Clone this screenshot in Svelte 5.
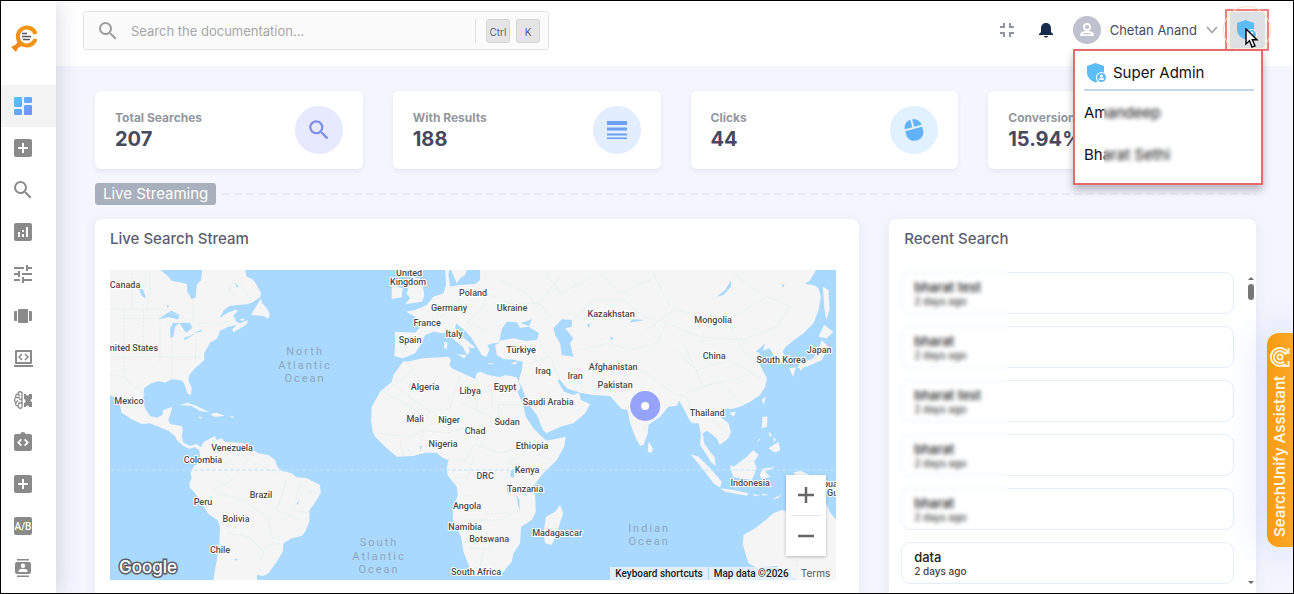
<script>
  const nav = ['dashboard', 'add', 'search', 'analytics', 'tune', 'carousel', 'laptop', 'brain', 'integration', 'add', 'ab', 'contacts'];
  const navNames = ['Dashboard', 'Content Sources', 'Search Clients', 'Analytics', 'Tuning', 'Recommendations', 'Developer', 'Machine Learning', 'API', 'Addons', 'A/B Testing', 'Users'];

  const stats = [
    { label: 'Total Searches', value: '207', icon: 'search', tint: 'violet' },
    { label: 'With Results', value: '188', icon: 'lines', tint: 'blue' },
    { label: 'Clicks', value: '44', icon: 'mouse', tint: 'sky' },
    { label: 'Conversions', value: '15.94%', icon: '', tint: 'sky' }
  ];

  const recent = ['bharat test', 'bharat', 'bharat test', 'bharat', 'bharat', 'data'];

  const places = [
    ['Canada', 125, 288], ['United States', 131, 351], ['Mexico', 129, 404], ['Venezuela', 232, 451],
    ['Colombia', 203, 463], ['Brazil', 261, 498], ['Peru', 203, 505], ['Bolivia', 236, 522], ['Chile', 220, 553],
    ['United', 409, 276], ['Kingdom', 408, 285], ['Poland', 473, 296], ['Germany', 449, 311], ['Ukraine', 512, 311],
    ['France', 427, 326], ['Italy', 454, 337], ['Spain', 410, 343], ['Türkiye', 521, 353], ['Kazakhstan', 611, 317],
    ['Mongolia', 713, 323], ['China', 714, 359], ['Japan', 819, 353], ['South Korea', 781, 363], ['Iraq', 543, 374],
    ['Iran', 575, 379], ['Afghanistan', 613, 370], ['Pakistan', 615, 388], ['Algeria', 425, 390], ['Libya', 470, 394],
    ['Egypt', 505, 390], ['Saudi Arabia', 548, 405], ['Mali', 415, 422], ['Niger', 449, 423], ['Chad', 475, 434],
    ['Sudan', 507, 425], ['Nigeria', 443, 447], ['Ethiopia', 532, 449], ['DRC', 485, 479], ['Kenya', 527, 473],
    ['Tanzania', 525, 492], ['Angola', 467, 509], ['Namibia', 465, 530], ['Botswana', 489, 542], ['Madagascar', 557, 536],
    ['South Africa', 476, 575], ['Thailand', 707, 416], ['Indonesia', 750, 486], ['Papua New', 835, 487], ['Guinea', 841, 496], ['Australia', 806, 547]
  ];

  const oceans = [
    ['North', 305, 355], ['Atlantic', 305, 369], ['Ocean', 305, 382],
    ['South', 379, 546], ['Atlantic', 379, 560], ['Ocean', 379, 573],
    ['Indian', 649, 532], ['Ocean', 649, 545]
  ];
</script>

{#snippet icon(name)}
  <svg class="icon" viewBox="0 0 24 24" width="24" height="24" aria-hidden="true">
    {#if name === 'dashboard'}
      <defs><linearGradient id="dash" x1="3" y1="3" x2="21" y2="21" gradientUnits="userSpaceOnUse"><stop offset="0" stop-color="#53c5fe" /><stop offset="1" stop-color="#768cfb" /></linearGradient></defs>
      <g fill="url(#dash)"><rect x="3" y="3" width="8" height="10" rx="1" /><rect x="3" y="15" width="8" height="6" rx="1" /><rect x="13" y="3" width="8" height="6" rx="1" /><rect x="13" y="11" width="8" height="10" rx="1" /></g>
    {:else if name === 'add'}
      <path d="M19 3H5a2 2 0 0 0-2 2v14a2 2 0 0 0 2 2h14a2 2 0 0 0 2-2V5a2 2 0 0 0-2-2zm-2 10h-4v4h-2v-4H7v-2h4V7h2v4h4v2z" />
    {:else if name === 'search'}
      <path d="M15.5 14h-.79l-.28-.27A6.471 6.471 0 0 0 16 9.5 6.5 6.5 0 1 0 9.5 16c1.61 0 3.09-.59 4.23-1.57l.27.28v.79l5 4.99L20.49 19l-4.99-5zm-6 0C7.01 14 5 11.99 5 9.5S7.01 5 9.5 5 14 7.01 14 9.5 11.99 14 9.5 14z" />
    {:else if name === 'analytics'}
      <path d="M19 3H5a2 2 0 0 0-2 2v14a2 2 0 0 0 2 2h14a2 2 0 0 0 2-2V5a2 2 0 0 0-2-2zM9 17H7v-5h2v5zm4 0h-2v-3h2v3zm0-5h-2v-2h2v2zm4 5h-2V7h2v10z" />
    {:else if name === 'tune'}
      <path d="M3 17v2h6v-2H3zM3 5v2h10V5H3zm10 16v-2h8v-2h-8v-2h-2v6h2zM7 9v2H3v2h4v2h2V9H7zm14 4v-2H11v2h10zm-6-4h2V7h4V5h-4V3h-2v6z" />
    {:else if name === 'carousel'}
      <path d="M8 5h8a1 1 0 0 1 1 1v12a1 1 0 0 1-1 1H8a1 1 0 0 1-1-1V6a1 1 0 0 1 1-1zM4 7h2v10H4a1 1 0 0 1-1-1V8a1 1 0 0 1 1-1zm14 0h2a1 1 0 0 1 1 1v8a1 1 0 0 1-1 1h-2z" />
    {:else if name === 'laptop'}
      <path fill-rule="evenodd" d="M5 4h15a1 1 0 0 1 1 1v12a1 1 0 0 1-1 1H5a1 1 0 0 1-1-1V5a1 1 0 0 1 1-1zm1 2v10h13V6zM3 19h19v2H3z" /><path d="M11 8 8 11l3 3M14 8l3 3-3 3" fill="none" stroke="currentColor" stroke-width="1.500" />
    {:else if name === 'brain'}
      <path d="M11 4.500C9 3 7 4 7 6 5 6 4 8 5 9.500 3 10.500 3 13.500 5 14.500 4 16.500 5 18 7 18c0 2 3 3 4 1.500zM7 6l2 2M5 9.500h3l1 2M5 14.500l2-2M7 18l1-3h3M11 11l-2 1" fill="none" stroke="currentColor" stroke-width="1.300" />
      <path d="M13 6h2c0 2 3 2 3 0h3v5c-2 0-2 3 0 3v5h-3c0-2-3-2-3 0h-2v-4c2 0 2-4 0-4z" />
    {:else if name === 'integration'}
      <path fill-rule="evenodd" d="M19 4h-4.200a3 3 0 0 0-5.600 0H5a2 2 0 0 0-2 2v13a2 2 0 0 0 2 2h14a2 2 0 0 0 2-2V6a2 2 0 0 0-2-2zm-8 11-1.200 1.200L6 12.500l3.800-3.700L11 10l-2.500 2.500zm3.200 1.200L13 15l2.500-2.500L13 10l1.200-1.200 3.800 3.700z" />
    {:else if name === 'ab'}
      <path d="M19 3H5a2 2 0 0 0-2 2v14a2 2 0 0 0 2 2h14a2 2 0 0 0 2-2V5a2 2 0 0 0-2-2z" />
      <text x="12" y="16" fill="#fff" font-family="Roboto, sans-serif" font-size="10" font-weight="500" text-anchor="middle">A/B</text>
    {:else if name === 'contacts'}
      <path d="M6 3h12v1.500H6zM6 19.500h12V21H6z" /><path fill-rule="evenodd" d="M6 6h12a2 2 0 0 1 2 2v8a2 2 0 0 1-2 2H6a2 2 0 0 1-2-2V8a2 2 0 0 1 2-2zm6 1.500a2.200 2.200 0 1 0 0 4.400 2.200 2.200 0 0 0 0-4.400zM7.500 16h9v-1c0-3-9-3-9 0z" />
    {:else if name === 'lines'}
      <path d="M2 3h20v4H2zM2 9.500h20v3H2zM2 15.500h20v2H2zM2 19.500h20v1.500H2z" />
    {:else if name === 'mouse'}
      <g transform="rotate(-15 12 12)"><path d="M11 1.200C6.700 1.700 3.600 4.500 3.300 9H11zM13 1.200c4.300.5 7.400 3.300 7.700 7.800H13zM3.300 11h17.400v3.500c0 11-17.400 11-17.400 0z" /></g>
    {/if}
  </svg>
{/snippet}

{#snippet shield()}
  <svg class="shield" viewBox="0 0 22 22" width="22" height="22" aria-hidden="true">
    <path d="M9.500 1 18 4v6c0 6-4 9-8.500 10.500C5 19 1 16 1 10V4z" fill="#5cbcf6" />
    <circle cx="15.500" cy="15.500" r="5.500" fill="#fff" /><circle cx="15.500" cy="15.500" r="4.500" fill="#5cbcf6" />
    <circle cx="15.500" cy="14" r="1.600" fill="#fff" /><path d="M12.800 18c0-3 5.400-3 5.400 0z" fill="#fff" />
  </svg>
{/snippet}

<div class="shell">
  <nav class="sidebar" aria-label="Main">
    <a class="logo" href="#home" aria-label="Home">
      <svg viewBox="0 0 30 30" width="30" height="30" aria-hidden="true">
        <path d="M25.500 11A9 9 0 1 0 25.500 16" fill="none" stroke="#f39313" stroke-width="4" />
        <path d="m9 18 4 4-5 3-2 4-5-5 4-2z" fill="#ef8a16" />
        <path d="M12 10.500h5M12 13.500h9M13 16.500h7" stroke="#555" stroke-width="1.300" />
      </svg>
    </a>
    {#each nav as name, i}
      <a class="nav-item" class:active={i === 0} href="#section-{i}" aria-label={navNames[i]}>{@render icon(name)}</a>
    {/each}
  </nav>

  <div class="page">
    <header>
      <div class="search">
        <label for="doc-search" aria-label="Search">{@render icon('search')}</label>
        <input id="doc-search" type="text" placeholder="Search the documentation..." />
        <span class="keys"><kbd>Ctrl</kbd><kbd>K</kbd></span>
      </div>
      <div class="tools">
        <button class="plain" aria-label="Exit full screen">
          <svg viewBox="0 0 14 14" width="14" height="14" aria-hidden="true"><path d="M0 4h4V0M10 0v4h4M14 10h-4v4M4 14v-4H0" fill="none" stroke="#8f94a3" stroke-width="2" /></svg>
        </button>
        <button class="plain bell" aria-label="Notifications">
          <svg viewBox="0 0 16 16" width="16" height="16" aria-hidden="true"><path d="M8 1c3.500 0 5 2.500 5 5.500V10l2 2v1H1v-1l2-2V6.500C3 3.500 4.500 1 8 1zM6 14h4c-.5 2-3.500 2-4 0z" fill="#172b4d" /></svg>
        </button>
        <button class="user">
          <svg viewBox="0 0 28 28" width="28" height="28" aria-hidden="true"><circle cx="14" cy="14" r="14" fill="#bfc1cf" /><circle cx="14" cy="11" r="3" fill="none" stroke="#fff" stroke-width="1.800" /><path d="M8 19.200c0-4.300 12-4.300 12 0z" fill="none" stroke="#fff" stroke-width="1.800" stroke-linejoin="round" /></svg>
          <span>Chetan Anand</span>
          <svg viewBox="0 0 12 8" width="12" height="8" aria-hidden="true"><path d="m1 1 5 5.500L11 1" fill="none" stroke="#a5a5a5" stroke-width="1.800" /></svg>
        </button>
        <div class="role">
          <button class="role-button" aria-label="Switch role"><span>{@render shield()}</span></button>
          <svg class="cursor" viewBox="0 0 14 20" width="14" height="20" aria-hidden="true"><path d="M1 1v15l3.500-3.300L7 19l3-1.200-2.700-6H12z" fill="#fff" stroke="#000" stroke-width="1.400" /></svg>
          <div class="menu">
            <div class="menu-title">{@render shield()}<span>Super Admin</span></div>
            <button>Amandeep</button>
            <button>Bharat Sethi</button>
            <i class="veil"></i>
          </div>
        </div>
      </div>
    </header>

    <main>
      <section class="stats">
        {#each stats as s}
          <article class="stat">
            <div><h2>{s.label}</h2><strong>{s.value}</strong></div>
            <span class="badge {s.tint}">{@render icon(s.icon)}</span>
          </article>
        {/each}
      </section>

      <div class="divider"><span>Live Streaming</span><i></i></div>

      <section class="panels">
        <article class="panel stream">
          <h2>Live Search Stream</h2>
          <div class="map">
            <svg viewBox="0 0 726 310" preserveAspectRatio="xMidYMid slice" role="img" aria-label="World map">
              <g transform="scale(.33333) translate(-30 -30)">
                <path class="land" d="M30 30H180L200 45 215 62 245 68 260 72 262 95 275 118 287 112 290 75 303 60 307 30H435L440 50 458 58 470 75 483 100 480 112 455 128 440 133 390 137 372 150 358 175 380 160 410 148 412 155 400 165 408 185 420 190 445 180 438 195 400 217 397 208 410 195 385 200 360 212 352 235 330 248 318 270 312 280 313 300 285 325 268 345 265 360 275 385 273 405 262 400 252 368 240 360 215 358 195 368 175 363 150 372 132 385 130 420 135 445 150 468 170 473 187 465 190 450 217 440 213 455 205 480 210 492 245 498 248 510 245 530 250 548 270 558 290 552 302 562 312 545 345 528 350 540 365 535 375 545 430 550 450 565 475 580 505 585 525 600 532 620 545 632 575 640 590 652 620 655 660 675 662 700 640 735 628 750 628 785 615 815 605 828 575 835 550 850 548 875 530 905 505 940 490 948 470 945 472 960H340L345 930 352 890 358 850 360 800 352 780 325 762 305 730 285 700 270 683 268 670 275 655 272 640 280 620 300 605 300 585 297 570 285 562 268 566 250 558 230 540 225 528 205 512 175 500 150 490 125 492 95 478 65 458 60 435 42 410 30 405z" />
                <path class="land" d="m240 435 22-7 28 10 38 19-28-4-25-15zM330 462l20-4 25 9-30 4zM293 470l14 2-5 4zM387 469h15l-4 4zM453 165l12-20 18-30 3 15 14 14 9 17-4 15-14-8zM417 178l12 6 5-8z" />
                <path class="water" d="m175 178 25-18 15-8 23 13-3 13-30-6zM212 235l-2-30 10-17 18 2-13 10-5 30zM238 188l32 0 7 16-19 14-13-18zM250 235l35-13-30 18zM280 218l30-10-10 8zM115 82l15 8 8 25-13-7zM200 135l8 3-6 5zM405 68l10 10-4 6zM403 897l12-1-8 6zM590 730l8-10-5 15z" />
                <path class="border" d="M30 148H185L290 188 358 195 410 175M150 40v45l-10 60M280 118v75M95 40v105M30 345l45 5 30 35 35 20M30 290h275M60 175h110M130 150v130M72 150v190M180 190v115M215 240v115M290 215l-5 90M410 110l-25-20 20-30 40 45M340 690l60-30-40-30 50-50 60 30 60 30M350 700l80 20 70 50 20 70M385 820l60 10 50 50M560 660l-30 90 70 30M600 670l-20 80 50 10M620 690l30 10M365 790l40 40M480 900l20-40 40-10" />
              </g>
              <g transform="scale(.33333) translate(750 -30)">
                <path class="land" d="M35 440 60 395 95 365 100 345 130 303 140 305 190 295 265 290 272 300 268 315 275 325 345 357 350 340 360 335 385 345 420 352 435 345 470 352 482 385 472 395 488 430 497 470 520 505 545 530 560 542 617 530 612 560 590 600 545 645 530 665 515 685 525 705 527 755 515 780 483 800 480 850 460 880 455 905 430 935 420 948H345L330 925 310 875 303 830 278 780 280 740 293 705 290 680 262 645 260 625 265 600 245 592 230 578 195 578 160 588 110 590 80 565 65 550 45 530 38 515 33 480z" />
                <path class="land" d="M105 215 165 218 178 205 165 170 138 155 165 150 200 135 220 110 250 100 258 75 255 30H268L265 45 270 80 300 75 345 72 360 60V30H1368L1350 60 1335 72 1360 75 1375 85 1382 110 1375 150 1360 190 1330 220 1295 245 1275 262 1268 275 1280 300 1250 312 1235 275 1228 265 1208 272 1215 250 1187 275 1200 280 1190 298 1210 335 1220 355 1215 380 1200 405 1170 425 1140 440 1115 447 1085 445 1080 470 1105 490 1112 515 1105 535 1078 555 1070 535 1040 512 1028 520 1032 550 1050 575 1063 590 1067 617 1055 610 1030 570 1020 555 1022 520 1015 490 995 490 985 475 970 445 957 422 950 437 925 440 900 470 865 495 863 520 850 555 840 557 825 530 810 490 802 450 785 447 765 425 750 408 700 405 660 398 620 385 598 358 592 362 612 395 640 405 657 398 662 420 690 432 675 460 640 490 600 500 560 520 550 512 530 465 500 425 485 380 475 365 485 330 488 305 465 300 430 297 410 285 405 255 420 248 400 250 382 255 388 270 378 292 365 285 350 260 335 235 318 215 300 200 288 190 285 205 300 225 325 245 345 262 335 265 325 260 330 275 320 285 308 260 280 238 262 215 245 220 222 215 195 225 185 250 165 280 140 290 125 295 103 288 105 250z" />
                <path class="land" d="M273 30h47l-5 15-15 10-10 15zM155 50l30 8 8 50-8 17-50 8 15-18-10-14zM95 75l33 10-3 27-30 5zM293 283l27 2-8 10zM252 245l10 3-2 20-8-3zM383 308l22 3-18 2zM452 310l22-6-10 10zM558 770l27-15 15-20 9 25-19 60-15 35-20-5-5-35z" />
                <path class="water" d="m418 242 7-35 15-22 30 2 10 16 25-3 32 20-7 20-32 3-38-8zM482 190l33-12-8 20zM580 205l25-27 30 2v20l-20 5 25 30-10 15 10 40-35-5-5-35-15-25zM452 632l12-4-3 25-10-3zM468 705l10 15v35zM438 670l5 32 6-3zM178 557l8 2-5 12zM680 195l10-5-3 15zM808 188l10-10 36 2-30 5zM1070 110l25-20 18-30-1 20-22 25zM1265 75l8-3-4 12zM750 230l12 5-10 6z" />
                <path class="border" d="M130 305l30 20-40 40-50 30 140 80M100 375l110 80 60-10 30-100M350 450l0-95M305 430l110 50 0-45h65M395 350v90M60 520l90 10 40-20 70 10 60-20M180 575l10-60M130 590l-10-50M265 600l50 0 30-50 70 30 70-20M340 590l-15 60-60 5M435 660l15-60 60-20M290 700l60 10 30 50 70 0M300 780l120 0 60-30M330 865l60 0 40-40M310 930l50-10 10-50M550 530l-30 50 60 20M110 220l20 60M170 215l60 0M215 110l25 40-25 60M290 80l10 60-60 30M350 70l30 60-60 60 60 20M380 100l70 30 90 0 40 50M510 310l60-20 30 70M570 280l-30-30M640 180l60-60 90 0 60 50 70 20-30 60-80 20-70-20-80 20M640 390l40-60 60-20 70-10M760 410l50-90 50 20 80 60 40 10 20 80M860 210l80-60 100 20 80 0 100-60 70 30-40 60-100 40-130-10-100-40M940 270l70 60 100-30 100 60M970 250l60 130 120-30M1100 180l60 110M1150 440l-70-80-100 40M420 60l80 40 30 40 70-90M560 40l40 60 100-50M720 40l60 60 90-40M880 40l50 100M1120 40l80 60M820 400l60 50-30 60M1030 440l50 60 20 20" />
              </g>
              <g transform="scale(.33333) translate(1470 -30)">
                <path class="land" d="m145 545 13 20-3 13-12-2zM272 583l23 7 35 35 35 40-5 18-20-13-30-40zM360 685l40 5 45 10-5 7-65-12zM390 615l10 5 40-30 20-20 15 15-13 20 8 20-15 35-55-8-8-22zM480 640l10-15 35-3-30 13 15 15-15 5-5 10-10-15zM487 470l15 0-2 30-15 5zM505 565l30-20 5 25-15 8zM505 515l10 10-6 7zM520 530l8 10-8 5zM482 535l-12 15 6-12zM485 420l12-12-6 27zM388 458l20-3-8 15zM655 230l17-35 28 20-20 20zM665 240l20 20-20 40-45 20-30 5 10-15 40-15 15-30zM568 325l20-3-10 28zM595 318l18 2-12 12zM668 80l17 10 3 60-10 30-6-40zM430 825l35-20 25-20 30-25 25-10 30 8 100 70 3-100 12 30 18 22v180H590l-60-42-60 5-25-13-8-25-9-32zM580 638l20-6 40 18 70 20v40l-90-20zM455 703l25 2-15 4zM485 700l20 4-17 3zM515 718l30-15-12 12z" />
                <path class="border" d="M402 620l60-20M590 960V800" />
              </g>
              <path class="equator" d="M0 200H726" />
              <g transform="translate(-110 -270)">
                {#each oceans as [name, x, y]}<text class="ocean" {x} {y}>{name}</text>{/each}
                {#each places as [name, x, y]}<text class="place" {x} {y}>{name}</text>{/each}
                <circle cx="645" cy="406" r="15" fill="#8f9ffa" opacity=".95" /><circle cx="645" cy="406" r="4" fill="#fff" />
                <text class="google" x="119" y="573">Google</text>
              </g>
            </svg>
            <div class="zoom">
              <button aria-label="Zoom in"><svg viewBox="0 0 18 18" width="18" height="18" aria-hidden="true"><path d="M9 1v16M1 9h16" stroke="#666" stroke-width="2.500" /></svg></button>
              <button aria-label="Zoom out"><svg viewBox="0 0 18 18" width="18" height="18" aria-hidden="true"><path d="M1 9h16" stroke="#666" stroke-width="2.500" /></svg></button>
            </div>
            <div class="credits"><button>Keyboard shortcuts</button><span>Map data ©2026</span><a href="#terms">Terms</a></div>
          </div>
        </article>

        <article class="panel recent">
          <h2>Recent Search</h2>
          <div class="feed">
            <ul>
              {#each recent as term}
                <li><span>{term}</span><small>2 days ago</small></li>
              {/each}
            </ul>
            <div class="track"><i class="up"></i><i class="thumb"></i><i class="down"></i></div>
            <i class="veil"></i>
          </div>
        </article>
      </section>
    </main>
  </div>

  <button class="assistant">
    <span>SearchUnify Assistant</span>
    <svg viewBox="0 0 20 20" width="20" height="20" aria-hidden="true"><g fill="none" stroke="#fff3d6" stroke-width="2"><path d="M15.500 17A9 9 0 1 1 18 6M14 14.500A6 6 0 1 1 15.500 8M18.500 1v5h-4M18.500 14v5h-6" /><circle cx="10" cy="10" r="2.500" /></g></svg>
  </button>
</div>

<style>
  :global(body) { margin: 0; }
  .shell, .shell :global(*) { box-sizing: border-box; }
  .shell {
    display: flex;
    position: relative;
    height: 100vh;
    overflow: hidden;
    border: 1px solid #000;
    background: #f4f5fd;
    color: #484b5e;
    font-family: Inter, "Noto Sans", sans-serif;
  }
  button, input { font: inherit; color: inherit; }
  button { border: 0; background: none; padding: 0; }
  a { color: inherit; text-decoration: none; }
  h2, ul { margin: 0; padding: 0; font-weight: 500; }
  .icon { display: block; fill: currentColor; }

  .sidebar {
    display: flex;
    flex-direction: column;
    flex: none;
    width: 55px;
    background: #fff;
    box-shadow: 0 0 24px rgba(60, 50, 90, .22);
    z-index: 2;
    color: #8a8a8a;
  }
  .logo { flex: none; height: 84px; padding: 22px 0 0 9px; }
  .nav-item { display: flex; flex: none; align-items: center; height: 42px; padding-left: 10px; }
  .active { background: #f3f3f3; }

  .page { display: flex; flex: 1; flex-direction: column; min-width: 0; }
  header {
    display: flex;
    flex: none;
    justify-content: space-between;
    height: 65px;
    padding: 10px 24px 0 27px;
    background: #fff;
  }
  .search {
    display: flex;
    align-items: center;
    width: 466px;
    height: 39px;
    padding: 0 8px 0 12px;
    border: 1px solid #e4e4e4;
    border-radius: 3px;
    background: #fbfbfb;
    color: #9c9c9c;
  }
  .search input { flex: 1; min-width: 0; height: 24px; margin-left: 11px; padding: 0; border: 0; outline: 0; background: none; font-size: 13px; }
  .search input::placeholder { color: #a6a6a6; opacity: 1; }
  .keys { display: flex; gap: 6px; padding-left: 10px; border-left: 1px solid #e0e0e0; }
  kbd { width: 24px; height: 24px; border: 1px solid #d3d3d3; border-radius: 3px; background: #e5e5e5; color: #5d6070; font: 10px/24px Inter, sans-serif; text-align: center; }

  .tools { display: flex; align-items: center; height: 38px; }
  .plain { display: flex; margin-right: 24px; }
  .bell { margin-right: 19px; }
  .user { display: flex; align-items: center; gap: 9px; font-size: 13px; }
  .role { position: relative; margin-left: 7px; }
  .role-button { display: grid; place-items: center; width: 44px; height: 42px; border: 2px solid #ed7f80; background: #fdf3e8; }
  .role-button span { display: grid; place-items: center; width: 35px; height: 36px; border-radius: 4px; background: #dde1e4; }
  .role-button::before { content: ""; position: absolute; inset: -3px -2px; border: 1px solid #f7dfc5; border-radius: 50%; }
  .cursor { position: absolute; left: 20px; top: 19px; z-index: 3; }
  .menu {
    position: absolute;
    z-index: 5;
    top: 40px;
    right: 6px;
    width: 190px;
    height: 136px;
    padding: 5px 7px 5px 9px;
    border: 2px solid #e76a6c;
    background: #fff;
    box-shadow: 0 5px 8px rgba(0, 0, 0, .25);
    color: #111;
    font-size: 15px;
  }
  .menu-title { display: flex; align-items: center; gap: 5px; height: 35px; padding-left: 2px; border-bottom: 2px solid #c3d7ea; }
  .menu button { display: block; height: 42px; }
  .menu .veil { position: absolute; left: 29px; top: 50px; width: 90px; height: 72px; backdrop-filter: blur(2px); }

  main { display: flex; flex: 1; flex-direction: column; min-height: 0; padding: 25px 37px 0 39px; }
  .stats { display: grid; flex: none; grid-template-columns: repeat(4, 1fr); gap: 30px; }
  .stat { display: flex; align-items: center; justify-content: space-between; height: 78px; padding: 2px 20px 0; border-radius: 6px; background: #fff; box-shadow: 0 2px 5px rgba(70, 70, 110, .08); }
  .stat h2 { color: #92979f; font-size: 12px; font-weight: 700; line-height: 16px; }
  .stat strong { display: block; color: #464a5c; font-size: 20px; line-height: 26px; }
  .badge { display: grid; place-items: center; width: 48px; height: 48px; margin-bottom: 2px; border-radius: 50%; }
  .violet { background: #e7e9fe; color: #7b8cea; }
  .violet :global(svg) { width: 26px; height: 26px; }
  .blue { background: #e2edff; color: #6a9ff5; }
  .sky { background: #e1f1ff; color: #61b2fa; }

  .divider { display: flex; flex: none; align-items: center; margin: 14px 0; }
  .divider span { padding: 0 8px; border-radius: 3px; background: #a8afbd; color: #fff; font-size: 15px; line-height: 22px; }
  .divider i { flex: 1; height: 2px; margin-left: 2px; background: repeating-linear-gradient(90deg, transparent 0 4px, #e1eefa 4px 12px); }

  .panels { display: grid; flex: 1; grid-template-columns: 25fr 12fr; gap: 30px; }
  .panel { min-width: 0; border-radius: 8px 8px 0 0; background: #fff; box-shadow: 0 2px 12px rgba(100, 110, 180, .1); }
  .panel h2 { height: 40px; padding-left: 15px; color: #5a5e6e; font-size: 15px; line-height: 40px; }
  .map { position: relative; height: 310px; margin: 11px 23px 0 15px; overflow: hidden; background: #a9d9ff; }
  .map > svg { display: block; width: 100%; height: 100%; }
  .land { fill: #f5f5f5; }
  .water { fill: #a9d9ff; }
  .border { fill: none; stroke: #d8f0ec; stroke-width: 2; stroke-dasharray: 7 4; }
  .equator { stroke: #c4e5ff; stroke-width: 1; stroke-dasharray: 4 2; }
  .place { fill: #4b4b4b; stroke: #fff; stroke-width: 2px; paint-order: stroke; font: 500 9px Roboto, sans-serif; text-anchor: middle; }
  .ocean { fill: #8fa6b8; font: 11px Roboto, sans-serif; letter-spacing: 2px; text-anchor: middle; }
  .google { fill: #fff; stroke: #5b6068; stroke-width: 3px; paint-order: stroke; font: 500 17px Inter, sans-serif; }
  .zoom { position: absolute; right: 10px; bottom: 24px; width: 40px; background: #fff; box-shadow: 0 1px 3px rgba(0, 0, 0, .25); }
  .zoom button { display: grid; place-items: center; width: 40px; height: 40px; }
  .zoom button + button { height: 41px; background: linear-gradient(#e4e4e4, #e4e4e4) center top / 30px 1px no-repeat; }
  .credits { display: flex; gap: 1px; position: absolute; right: 0; bottom: 0; color: #222; font: 500 10px/13px Roboto, sans-serif; }
  .credits > * { height: 13px; padding: 0 5px; background: rgba(245, 245, 245, .75); }
  .credits a { padding: 0 6px; color: #555; font: 10px/13px Inter, sans-serif; }

  .feed { display: flex; position: relative; justify-content: space-between; padding: 13px 1px 0 12px; }
  .feed ul { flex: 1; list-style: none; }
  .feed li { height: 42px; margin-bottom: 12px; padding: 6px 12px; border: 1px solid #e2effa; border-radius: 9px; background: #fff; color: #222; }
  .feed li span, .feed li small { display: block; }
  .feed li span { font-size: 13px; line-height: 16px; }
  .feed li small { color: #444; font-size: 10px; line-height: 12px; }
  .feed .veil { position: absolute; left: 6px; top: 3px; width: 113px; height: 265px; backdrop-filter: blur(2px); }
  .track { display: flex; flex-direction: column; align-items: center; width: 8px; height: 312px; margin-left: 13px; padding-top: 5px; }
  .up, .down { border: 3px solid transparent; }
  .up { border-top: 0; border-bottom-color: #6b6b6b; }
  .down { margin-top: auto; border-bottom: 0; border-top-color: #6b6b6b; }
  .thumb { width: 6px; height: 16px; margin-top: 4px; border-radius: 3px; background: #777; }

  .assistant {
    display: flex;
    position: absolute;
    z-index: 4;
    right: 0;
    top: 332px;
    align-items: center;
    justify-content: space-between;
    width: 26px;
    height: 214px;
    padding: 10px 0 14px;
    border-radius: 0 12px 12px 0;
    background: linear-gradient(270deg, #f99b0c, #f9a72b);
    box-shadow: 0 0 40px rgba(70, 130, 240, .28);
    color: #fff5df;
    font-size: 15px;
    font-weight: 600;
    line-height: 26px;
    white-space: nowrap;
    writing-mode: vertical-rl;
    transform: rotate(180deg);
  }
  .assistant svg { flex: none; transform: rotate(180deg); }
</style>
